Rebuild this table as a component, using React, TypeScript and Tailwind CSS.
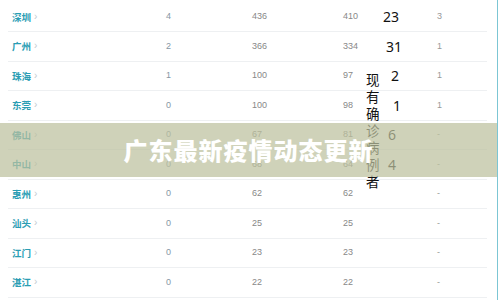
const ROWS = [
  { city: '深圳', a: '4', b: '436', c: '410', big: '23', bigX: 'pl-0', d: '3' },
  { city: '广州', a: '2', b: '366', c: '334', big: '31', bigX: 'pl-[3px]', d: '1' },
  { city: '珠海', a: '1', b: '100', c: '97', big: '2', bigX: 'pl-[8px]', d: '1' },
  { city: '东莞', a: '0', b: '100', c: '98', big: '1', bigX: 'pl-[10px]', d: '1' },
  { city: '佛山', a: '0', b: '67', c: '81', big: '6', bigX: 'pl-[5px]', d: '-' },
  { city: '中山', a: '0', b: '68', c: '64', big: '4', bigX: 'pl-[5px]', d: '-' },
  { city: '惠州', a: '0', b: '62', c: '62', big: '', bigX: '', d: '-' },
  { city: '汕头', a: '0', b: '25', c: '25', big: '', bigX: '', d: '-' },
  { city: '江门', a: '0', b: '23', c: '23', big: '', bigX: '', d: '-' },
  { city: '湛江', a: '0', b: '22', c: '22', big: '', bigX: '', d: '-' },
];

export default function App() {
  return (
    <div className="relative w-[498px] h-[300px] overflow-hidden bg-white border-r border-[#7cc6d4] font-['Liberation_Sans','Noto_Sans_CJK_SC',sans-serif]">
      {/* table */}
      <div className="pt-[2.5px] pl-2 pr-[10px]">
        {ROWS.map(r => (
          <div key={r.city} className="flex items-center h-[29.5px] border-b border-[#eef0f2] text-[9px]">
            <div className="w-[158px] pl-1 flex items-center gap-[3px]">
              <span className="text-[#2a9db3] text-[9.5px] font-['Noto_Sans_CJK_SC',sans-serif] font-bold">{r.city}</span>
              <span className="text-[#c2cbd0] text-[10px] leading-none">›</span>
            </div>
            <div className="w-[86px] text-[#8696a4]">{r.a}</div>
            <div className="w-[91px] text-[#888]">{r.b}</div>
            <div className="w-[40px] text-[#888]">{r.c}</div>
            <div className={`w-[54px] text-[14px] text-[#111] font-['Noto_Sans',sans-serif] ${r.bigX}`}>{r.big}</div>
            <div className="flex-1 text-[#999]">{r.d}</div>
          </div>
        ))}
      </div>

      {/* vertical caption */}
      <div className="absolute left-[366px] top-[71px] w-[14px] text-[13.5px] leading-[17px] text-[#111] font-['Noto_Sans_CJK_SC',sans-serif] break-all">
        现有确诊病例者
      </div>

      {/* banner */}
      <div className="absolute left-0 right-0 top-[123px] h-[54px] bg-[rgba(188,192,158,0.72)] flex items-center justify-center">
        <span className="text-white text-[24px] font-black tracking-[1px] font-['Noto_Sans_CJK_SC',sans-serif]">
          广东最新疫情动态更新
        </span>
      </div>
    </div>
  );
}
